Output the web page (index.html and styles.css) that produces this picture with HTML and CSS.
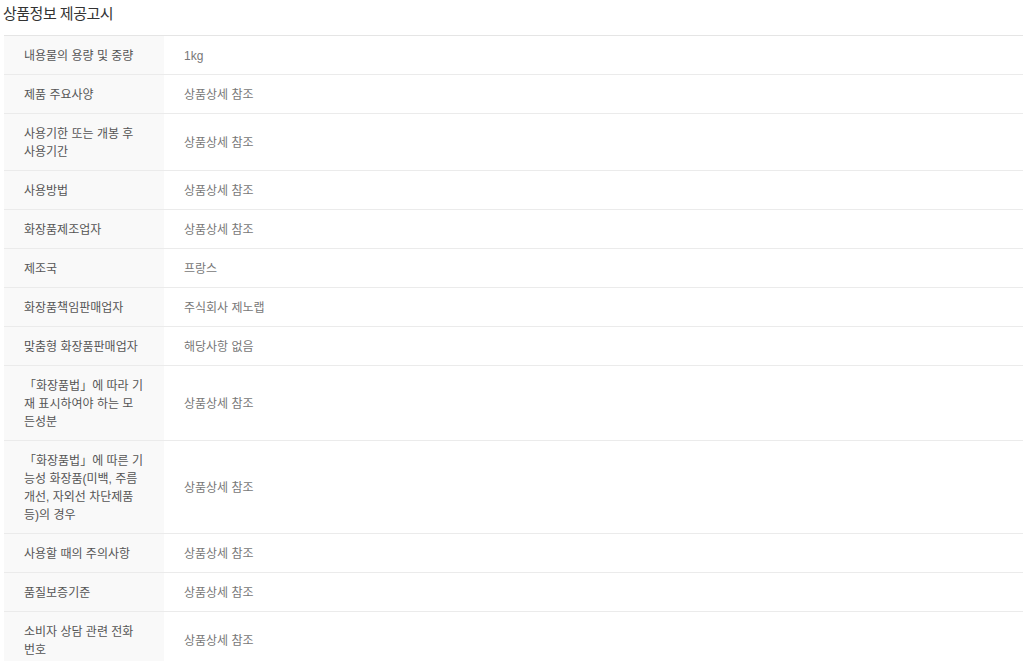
FILE: index.html
```html
<!DOCTYPE html>
<html lang="ko">
<head>
<meta charset="utf-8">
<title>상품정보 제공고시</title>
<link rel="stylesheet" href="styles.css">
</head>
<body>
<div class="notice">
  <h2 class="notice-title">상품정보 제공고시</h2>
  <table class="info-table">
    <tbody>
      <tr><th>내용물의 용량 및 중량</th><td>1kg</td></tr>
      <tr><th>제품 주요사양</th><td>상품상세 참조</td></tr>
      <tr><th>사용기한 또는 개봉 후 사용기간</th><td>상품상세 참조</td></tr>
      <tr><th>사용방법</th><td>상품상세 참조</td></tr>
      <tr><th>화장품제조업자</th><td>상품상세 참조</td></tr>
      <tr><th>제조국</th><td>프랑스</td></tr>
      <tr><th>화장품책임판매업자</th><td>주식회사 제노랩</td></tr>
      <tr><th>맞춤형 화장품판매업자</th><td>해당사항 없음</td></tr>
      <tr><th>「화장품법」에 따라 기재 표시하여야 하는 모든성분</th><td>상품상세 참조</td></tr>
      <tr><th>「화장품법」에 따른 기능성 화장품(미백, 주름개선, 자외선 차단제품 등)의 경우</th><td>상품상세 참조</td></tr>
      <tr><th>사용할 때의 주의사항</th><td>상품상세 참조</td></tr>
      <tr><th>품질보증기준</th><td>상품상세 참조</td></tr>
      <tr><th>소비자 상담 관련 전화번호</th><td>상품상세 참조</td></tr>
    </tbody>
  </table>
</div>
</body>
</html>
```

FILE: styles.css
```css
html, body {
  margin: 0;
  padding: 0;
  background: #fff;
}
body {
  font-family: "Liberation Sans", "Noto Sans CJK KR", sans-serif;
}
.notice {
  padding: 0 3px 0 4px;
}
.notice-title {
  margin: 0 0 0 -1px;
  height: 35px;
  line-height: 27px;
  font-size: 15px;
  letter-spacing: -0.5px;
  font-weight: normal;
  color: #333;
}
.info-table {
  width: 100%;
  border-collapse: collapse;
  table-layout: fixed;
  border-top: 1px solid #e5e5e5;
}
.info-table th,
.info-table td {
  padding: 11px 20px 9px;
  font-size: 12px;
  line-height: 18px;
  font-weight: normal;
  text-align: left;
  vertical-align: middle;
  border-bottom: 1px solid #ebebeb;
  word-break: keep-all;
}
.info-table th {
  width: 120px;
  background: #f9f9f9;
  color: #555;
  word-break: break-all;
}
.info-table td {
  color: #777;
}
```
